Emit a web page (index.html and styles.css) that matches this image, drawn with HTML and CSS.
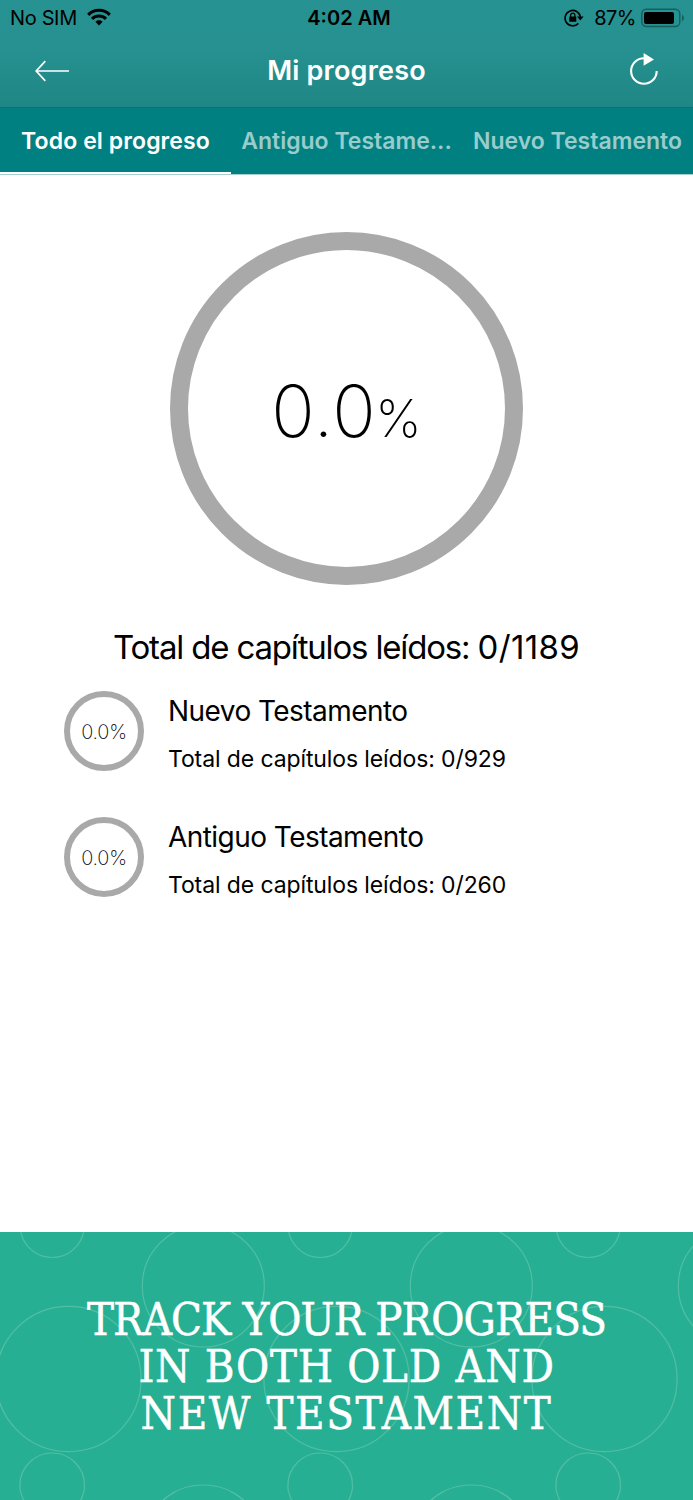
FILE: index.html
```html
<!DOCTYPE html>
<html lang="es">
<head>
<meta charset="utf-8">
<title>Mi progreso</title>
<link rel="stylesheet" href="styles.css">
</head>
<body>
<div class="screen">
  <header class="top">
    <div class="status">
      <div class="status-left"><span class="carrier">No SIM</span>
        <svg class="wifi" width="24" height="18" viewBox="0 0 24 18" fill="none" stroke="#000" stroke-width="3.1"><path d="M1.2 6.8a15.2 15.2 0 0 1 21.6 0"/><path d="M5 10.8a10 10 0 0 1 14 0"/><path d="M12 17.4 8.4 13.8a5.2 5.2 0 0 1 7.2 0z" fill="#000" stroke="none"/></svg>
      </div>
      <span class="clock">4:02 AM</span>
      <div class="status-right">
        <svg width="20" height="18" viewBox="0 0 20 18"><path d="M14.4 14.4A7.7 7.7 0 1 1 16.4 8" fill="none" stroke="#000" stroke-width="1.6"/><path d="M13 7.4h6.6l-3.3 4.2z"/><rect x="5.3" y="7.6" width="7" height="5.2" rx=".6"/><path d="M6.7 8V6.2a2.1 2.1 0 0 1 4.2 0V8" fill="none" stroke="#000" stroke-width="1.2"/></svg>
        <span class="charge">87%</span>
        <svg width="43" height="20" viewBox="0 0 43 20"><rect x=".8" y="1.3" width="38" height="17.2" rx="4.5" fill="none" stroke="#14605f" stroke-width="1.4"/><rect x="3" y="4" width="30" height="12" rx="2"/><path d="M41 6.8q2 1 2 3.2t-2 3.2z" fill="#14605f"/></svg>
      </div>
    </div>
    <nav class="bar">
      <svg width="34" height="22" viewBox="0 0 34 22" fill="none" stroke="#fff" stroke-width="1.7"><path d="M34 11H1M10.3 1.2 1.2 11l9.1 9.8"/></svg>
      <h1 class="title">Mi progreso</h1>
      <svg class="reload" width="28" height="32" viewBox="0 0 28 32"><path d="M26.7 18A12.8 12.8 0 1 1 13.9 5.2" fill="none" stroke="#fff" stroke-width="2.1"/><path d="M13.6 0v12.7L24 6.5z" fill="#fff"/></svg>
    </nav>
  </header>
  <div class="tabs">
    <div class="tab active"><span>Todo el progreso</span></div>
    <div class="tab"><span>Antiguo Testame...</span></div>
    <div class="tab"><span>Nuevo Testamento</span></div>
  </div>
  <main class="content">
    <div class="ring"><span class="value">0.0</span><span class="unit">%</span></div>
    <p class="total">Total de capítulos leídos: <span class="count">0/1189</span></p>
    <section class="book">
      <div class="mini">0.0%</div>
      <div class="info"><h2>Nuevo Testamento</h2><p>Total de capítulos leídos: 0/929</p></div>
    </section>
    <section class="book">
      <div class="mini">0.0%</div>
      <div class="info"><h2>Antiguo Testamento</h2><p>Total de capítulos leídos: 0/260</p></div>
    </section>
  </main>
  <footer class="banner">
    <svg class="bubbles" width="693" height="268" viewBox="0 0 693 268">
      <defs><pattern id="rings" width="268" height="260" patternUnits="userSpaceOnUse"><g fill="none" stroke="#51bea4" stroke-width="1.2"><circle cx="52.2" cy="-6.5" r="32"/><circle cx="52.2" cy="253.3" r="32.3"/><circle cx="203.3" cy="54" r="61"/><circle cx="68.5" cy="147" r="72.6"/><circle cx="336.5" cy="147" r="72.6"/></g></pattern></defs>
      <rect width="693" height="268" fill="url(#rings)"/>
      <g fill="none" stroke="#51bea4" stroke-width="1.2"><circle cx="203.3" cy="314" r="61"/><circle cx="471.3" cy="314" r="61"/></g>
    </svg>
    <p class="slogan"><span class="first">TRACK YOUR PROGRESS</span><br><span class="second">IN BOTH OLD AND</span><br><span class="third">NEW TESTAMENT</span></p>
  </footer>
</div>
</body>
</html>
```
FILE: styles.css
```css
* { box-sizing: border-box; margin: 0; padding: 0; }
body { font-family: Inter, "Liberation Sans", sans-serif; background: #fff; color: #000; }
.screen { width: 693px; height: 1500px; display: flex; flex-direction: column; overflow: hidden; white-space: nowrap; }
svg { display: block; flex: none; }
.top { height: 108px; background: linear-gradient(#279292, #269190 45%, #1f8786); border-bottom: 1px solid #087472; }
.status { height: 35px; padding: 1px 9px 0 10px; display: grid; grid-template-columns: 1fr auto 1fr; align-items: center; font-size: 20px; line-height: 34px; }
.status-left, .status-right { display: flex; align-items: center; }
.status-left { gap: 10px; }
.carrier { letter-spacing: -.35px; }
.wifi { margin-top: -3px; }
.status-right { justify-content: flex-end; gap: 5px; }
.status-right svg { margin-top: -1px; }
.charge { margin-left: 5px; letter-spacing: -.5px; }
.clock { font-weight: 600; padding-left: 4px; }
.bar { height: 72px; padding: 0 35px; display: flex; align-items: center; justify-content: space-between; }
.title { font-size: 27px; font-weight: 600; letter-spacing: .2px; color: #fff; line-height: 72px; padding-right: 6px; }
.reload { margin-top: -4px; }
.tabs { height: 67px; display: grid; grid-template: 66px / repeat(3, 231px); background: #008080; border-bottom: 1px solid #a7cfcf; }
.tab { height: 66px; display: flex; justify-content: center; font-size: 23px; font-weight: 600; line-height: 67px; color: #99cccc; }
.active { color: #fff; border-bottom: 2px solid #fff; letter-spacing: .1px; }
.content { flex: 1; display: flex; flex-direction: column; }
.ring { width: 353px; height: 353px; margin: 57px 0 0 170px; border: 18.5px solid #a9a9a9; border-radius: 50%; display: flex; justify-content: center; align-items: baseline; font-weight: 200; line-height: 322px; }
.value { font-size: 72px; letter-spacing: .6px; }
.unit { font-size: 52px; margin-left: -1px; }
.total { margin-top: 40px; text-align: center; font-size: 33px; line-height: 44px; letter-spacing: -1.17px; }
.count { letter-spacing: .35px; }
.book { height: 80px; margin: 22px 0 0 64px; display: flex; gap: 24px; }
.book + .book { margin-top: 46px; }
.mini { width: 80px; height: 80px; border: 6.5px solid #a9a9a9; border-radius: 50%; font-size: 20px; line-height: 70px; font-weight: 200; text-align: center; letter-spacing: -.2px; }
.info { display: flex; flex-direction: column; }
.info h2 { font-size: 28px; font-weight: 400; line-height: 40px; letter-spacing: -.55px; }
.info p { font-size: 23px; line-height: 32px; margin-top: 12px; letter-spacing: -.11px; }
.banner { position: relative; height: 268px; padding-top: 64px; background: #26af92; color: #fff; font-family: "DejaVu Serif Condensed", "DejaVu Serif", serif; font-stretch: condensed; }
.bubbles { position: absolute; inset: 0; }
.slogan { position: relative; text-align: center; font-size: 45px; line-height: 47px; -webkit-text-stroke: .5px #fff; }
.first { letter-spacing: -.9px; }
.second { letter-spacing: .7px; }
.third { letter-spacing: 1.6px; }
```
